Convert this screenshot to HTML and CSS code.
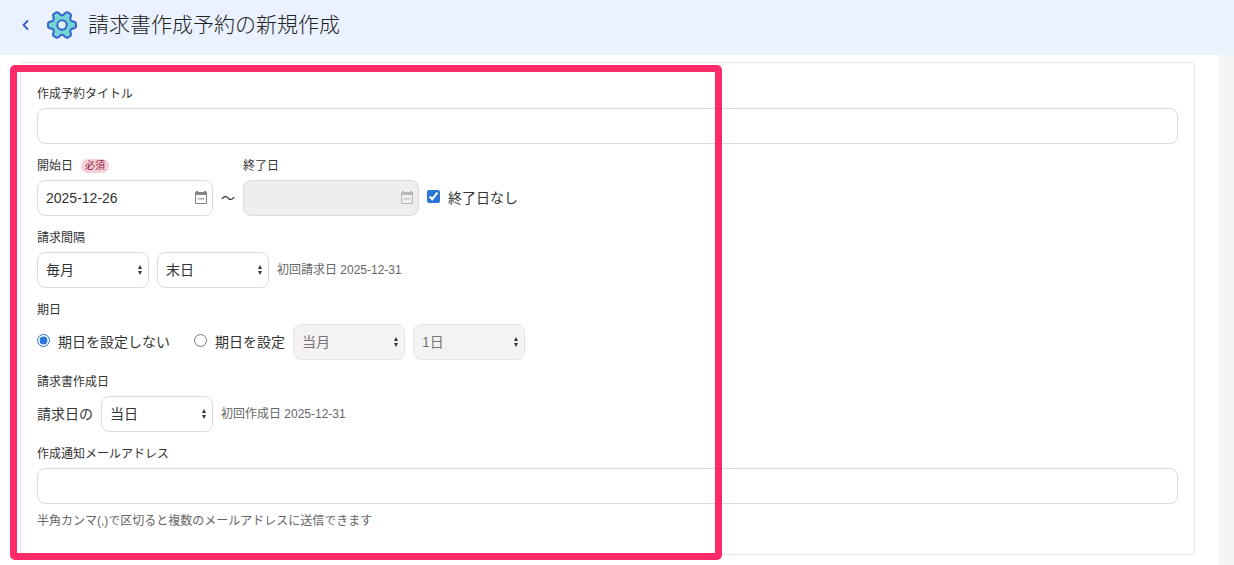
FILE: index.html
```html
<!DOCTYPE html>
<html lang="ja">
<head>
<meta charset="utf-8">
<meta name="viewport" content="width=device-width, initial-scale=1">
<title>請求書作成予約の新規作成</title>
<link rel="stylesheet" href="styles.css">
</head>
<body>
<header class="page-header">
  <button class="back" type="button" aria-label="戻る">
    <svg width="8" height="12" viewBox="0 0 8 12" fill="none" stroke="#2f5bd0" stroke-width="1.8" stroke-linecap="round" stroke-linejoin="round"><path d="M5.500 2 1.500 6l4 4"/></svg>
  </button>
  <svg class="gear" width="32" height="32" viewBox="0 0 32 32" stroke="#3562cf" stroke-width="2" stroke-linejoin="round" aria-hidden="true">
    <path fill="#74d3d3" d="M25.500 12 28.700 13Q30 13.500 30 14.800V17.200Q30 18.500 28.700 19L25.500 20Q24.300 20.600 24.200 22.200L25 25.200Q25.200 26.600 24.200 27.200L22 28.500Q20.800 29.100 19.700 28.200L17.300 26.200Q16 25.400 14.700 26.200L12.300 28.200Q11.200 29.100 10 28.500L7.800 27.200Q6.800 26.600 7 25.200L7.800 22.200Q7.700 20.600 6.500 20L3.300 19Q2 18.500 2 17.200V14.800Q2 13.500 3.300 13L6.500 12Q7.700 11.400 7.800 9.800L7 6.800Q6.800 5.400 7.800 4.800L10 3.500Q11.200 2.900 12.300 3.800L14.700 5.800Q16 6.600 17.300 5.800L19.700 3.800Q20.800 2.900 22 3.500L24.200 4.800Q25.200 5.400 25 6.800L24.200 9.800Q24.300 11.400 25.500 12Z"/>
    <circle cx="16" cy="16" r="4.700" fill="#ddf1f6"/>
  </svg>
  <h1 class="page-title">請求書作成予約の新規作成</h1>
</header>
<main class="content">
  <form class="card">
    <div class="field">
      <label class="label" for="title">作成予約タイトル</label>
      <input class="control" id="title" type="text">
    </div>
    <div class="row row-end">
      <div class="field">
        <label class="label" for="start">開始日<span class="required">必須</span></label>
        <div class="date">
          <input class="control" id="start" type="text" value="2025-12-26">
          <svg class="calendar" width="14" height="15" viewBox="0 0 14 15" aria-hidden="true"><path fill="#858585" fill-rule="evenodd" d="M2 1h2v1h6V1h2v1h.5q.5 0 .5 1v10q0 1-1 1H2q-1 0-1-1V3q0-1 1-1zM2 5v8h10V5zM4 8h1.500v1.500H4zm2.250 0h1.500v1.500h-1.500zm2.250 0H10v1.500H8.500z"/></svg>
        </div>
      </div>
      <span class="inline-text">～</span>
      <div class="field">
        <label class="label" for="end">終了日</label>
        <div class="date">
          <input class="control" id="end" type="text" disabled>
          <svg class="calendar" width="14" height="15" viewBox="0 0 14 15" aria-hidden="true"><path fill="#b9b8b8" fill-rule="evenodd" d="M2 1h2v1h6V1h2v1h.5q.5 0 .5 1v10q0 1-1 1H2q-1 0-1-1V3q0-1 1-1zM2 5v8h10V5zM4 8h1.500v1.500H4zm2.250 0h1.500v1.500h-1.500zm2.250 0H10v1.500H8.500z"/></svg>
        </div>
      </div>
      <label class="choice"><input type="checkbox" checked>終了日なし</label>
    </div>
    <div class="field" role="group" aria-labelledby="interval-label">
      <span class="label" id="interval-label">請求間隔</span>
      <div class="row">
        <div class="select">
          <select class="control" aria-label="請求間隔"><option>毎月</option></select>
          <svg class="arrows" width="6" height="10" viewBox="0 0 6 10" aria-hidden="true"><path fill="#333" d="M3 0 5 4H1zM1 6h4L3 10z"/></svg>
        </div>
        <div class="select">
          <select class="control" aria-label="請求日"><option>末日</option></select>
          <svg class="arrows" width="6" height="10" viewBox="0 0 6 10" aria-hidden="true"><path fill="#333" d="M3 0 5 4H1zM1 6h4L3 10z"/></svg>
        </div>
        <span class="note">初回請求日 2025-12-31</span>
      </div>
    </div>
    <div class="field" role="radiogroup" aria-labelledby="due-label">
      <span class="label" id="due-label">期日</span>
      <div class="row">
        <label class="choice choice-first"><input type="radio" name="due" checked>期日を設定しない</label>
        <label class="choice"><input type="radio" name="due">期日を設定</label>
        <div class="select">
          <select class="control" aria-label="期日の月" disabled><option>当月</option></select>
          <svg class="arrows" width="6" height="10" viewBox="0 0 6 10" aria-hidden="true"><path fill="#333" d="M3 0 5 4H1zM1 6h4L3 10z"/></svg>
        </div>
        <div class="select">
          <select class="control" aria-label="期日の日" disabled><option>1日</option></select>
          <svg class="arrows" width="6" height="10" viewBox="0 0 6 10" aria-hidden="true"><path fill="#333" d="M3 0 5 4H1zM1 6h4L3 10z"/></svg>
        </div>
      </div>
    </div>
    <div class="field">
      <label class="label" for="create-day">請求書作成日</label>
      <div class="row">
        <span class="inline-text">請求日の</span>
        <div class="select">
          <select class="control" id="create-day"><option>当日</option></select>
          <svg class="arrows" width="6" height="10" viewBox="0 0 6 10" aria-hidden="true"><path fill="#333" d="M3 0 5 4H1zM1 6h4L3 10z"/></svg>
        </div>
        <span class="note">初回作成日 2025-12-31</span>
      </div>
    </div>
    <div class="field">
      <label class="label" for="mail">作成通知メールアドレス</label>
      <input class="control" id="mail" type="text" aria-describedby="mail-help">
      <span class="note help" id="mail-help">半角カンマ(,)で区切ると複数のメールアドレスに送信できます</span>
    </div>
  </form>
  <div class="highlight" aria-hidden="true"></div>
</main>
</body>
</html>
```

FILE: styles.css
```css
* {
  box-sizing: border-box;
}

body {
  margin: 0;
  min-height: 100vh;
  display: flex;
  flex-direction: column;
  background: #fff;
  color: #333;
  font: 400 14px/20px "Liberation Sans", "Noto Sans CJK JP", sans-serif;
}

.page-header {
  display: flex;
  align-items: center;
  height: 55px;
  padding: 0 20px 6px;
  background: #ebf2ff;
}

.back {
  display: flex;
  padding: 2px;
  border: 0;
  background: none;
  cursor: pointer;
}

.gear {
  margin: 0 10px 0 14px;
}

.page-title {
  margin: 0;
  color: #222;
  font-size: 21px;
  font-weight: 300;
  line-height: 28px;
}

.content {
  position: relative;
  flex: 1;
  padding: 7px 24px 9px 20px;
  border-right: 15px solid #f6f4f5;
}

.card {
  display: flex;
  flex-direction: column;
  gap: 12px;
  padding: 21px 16px 23px;
  border: 1px solid #e6e6e6;
  border-radius: 4px;
}

.field {
  display: flex;
  flex-direction: column;
  gap: 4px;
}

.label {
  display: flex;
  align-items: center;
  gap: 8px;
  font-size: 12px;
  line-height: 20px;
}

.required {
  padding: 0 4px;
  border-radius: 7px;
  background: #f7d0d7;
  color: #8e1b3f;
  font-size: 10px;
  line-height: 14px;
}

.row {
  display: flex;
  align-items: center;
  gap: 8px;
}

.row-end {
  align-items: flex-end;
}

.control {
  appearance: none;
  width: 100%;
  height: 36px;
  padding: 0 8px;
  border: 1px solid #dadbdb;
  border-radius: 8px;
  background: #fff;
  color: #333;
  font: inherit;
  font-size: 14px;
}

.control:disabled {
  background: #efeeed;
  opacity: 1;
}

.select .control:disabled {
  border-color: #e6e5e6;
  background: #f4f2f3;
  color: #757575;
}

.date,
.select {
  position: relative;
}

.date {
  width: 176px;
}

.select {
  width: 112px;
}

.calendar {
  position: absolute;
  top: 10px;
  right: 5px;
}

.arrows {
  position: absolute;
  top: 13px;
  right: 6px;
  pointer-events: none;
}

.inline-text,
.choice {
  display: flex;
  align-items: center;
  height: 36px;
}

.choice {
  gap: 8px;
}

.choice input {
  width: 13px;
  height: 13px;
  margin: 0 0 3px;
  accent-color: #2a76d8;
}

.choice-first {
  margin-right: 16px;
}

.note {
  color: #666;
  font-size: 12px;
}

.help {
  margin-top: 3px;
}

/* Frame drawn over the left part of the form */
.highlight {
  position: absolute;
  top: 10px;
  bottom: 5px;
  left: 10px;
  width: 712px;
  border: 7px solid #ff2b69;
  border-radius: 5px;
  pointer-events: none;
}
```
